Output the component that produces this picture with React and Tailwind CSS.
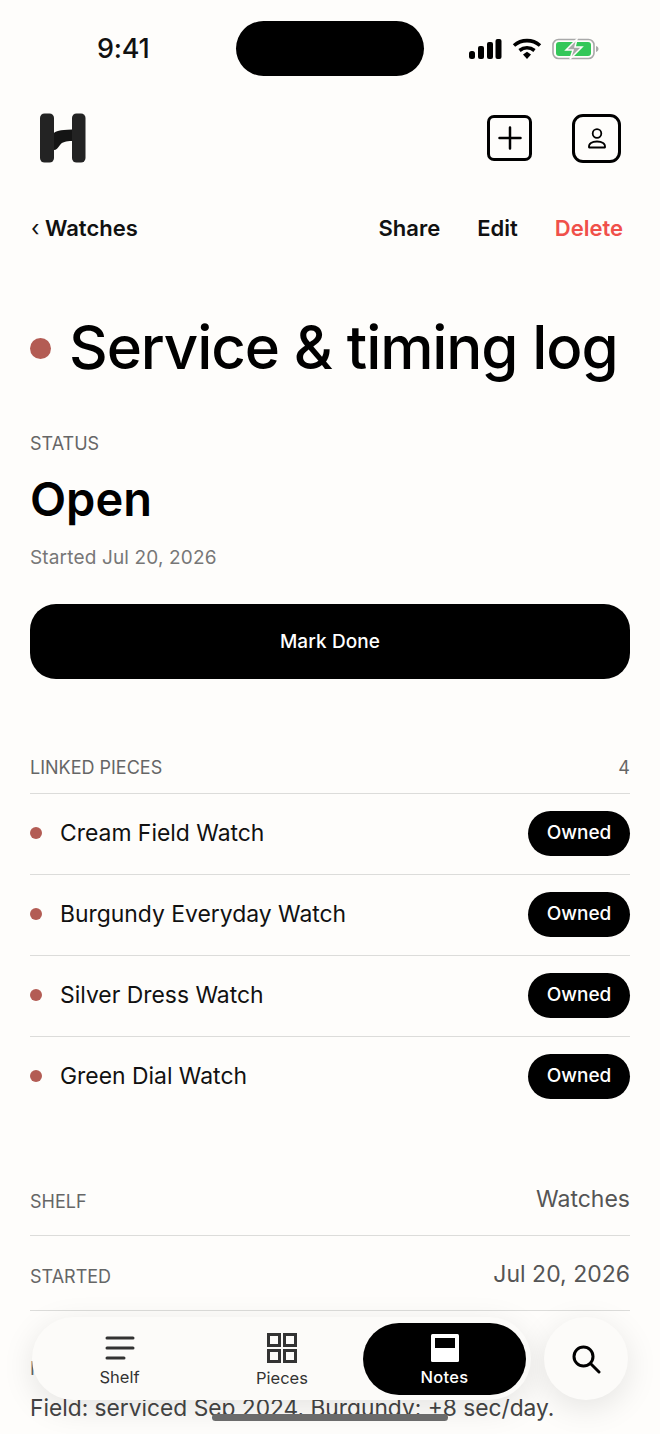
import React from "react";

const font = { fontFamily: "Inter, sans-serif" };

const pieces = ["Cream Field Watch", "Burgundy Everyday Watch", "Silver Dress Watch", "Green Dial Watch"];

function StatusBar() {
  return (
    <div className="h-[76px] flex items-start pl-[97px] pr-[61px] pt-[21px]">
      <div className="h-[55px] w-[54px] flex items-center pt-[2px] text-[27px] font-medium text-[#111] tracking-[-0.2px]">9:41</div>
      <div className="h-[55px] w-[188px] rounded-[28px] bg-black ml-[85px]"></div>
      <div className="flex items-center gap-[10px] h-[55px] ml-auto">
        <svg width="34" height="22" viewBox="0 0 34 22">
          <rect x="1" y="13" width="6" height="8" rx="2.500" fill="#000" />
          <rect x="10" y="8" width="6" height="13" rx="2" fill="#000" />
          <rect x="19" y="4" width="6" height="17" rx="2" fill="#000" />
          <rect x="27.500" y="1" width="6" height="20" rx="2" fill="#000" />
        </svg>
        <svg width="30" height="22" viewBox="0 0 30 22" fill="none">
          <path d="M2 7.500C9.500 1 20.500 1 28 7.500" stroke="#000" strokeWidth="3.600" />
          <path d="M7.500 12.500C12 9 18 9 22.500 12.500" stroke="#000" strokeWidth="3.600" />
          <path d="M11 16.500L15 13.800L19 16.500L15 21Z" fill="#000" />
        </svg>
        <svg width="47" height="22" viewBox="0 0 47 22" fill="none">
          <rect x="1" y="1.500" width="41" height="19" rx="5.500" stroke="#a9a9a9" strokeWidth="1.600" />
          <rect x="4" y="4" width="35" height="14" rx="3" fill="#34c759" />
          <path d="M44 8v6c1.500-.4 2.500-1.600 2.500-3s-1-2.600-2.500-3Z" fill="#a9a9a9" />
          <path d="M25 1L14 12h7l-3 9L30 9h-7l2-8Z" fill="#a9a9a9" stroke="#fefdfb" strokeWidth="1.500" />
        </svg>
      </div>
    </div>
  );
}

function Header() {
  return (
    <div className="h-[110px] flex items-center justify-between pl-[39px] pr-[39px] pt-[22px] pb-[8px]">
      <svg width="48" height="50" viewBox="0 0 48 50">
        <rect x="1" y="0.500" width="14" height="49" rx="4.500" fill="#232323" />
        <rect x="33" y="0.500" width="13.500" height="49" rx="4.500" fill="#232323" />
        <path d="M15 20C17 18 20 17 33 16.500V28C27 28 23 29 21 32C19 35 17 37 15 37Z" fill="#141414" />
      </svg>
      <div className="flex items-center gap-[40px]">
        <div className="w-[45px] h-[46px] rounded-[7px] border-[3px] border-black flex items-center justify-center">
          <svg width="24" height="24" viewBox="0 0 24 24" fill="none" stroke="#000" strokeWidth="2.500" strokeLinecap="round">
            <path d="M12 1.500v21M1.500 12h21" />
          </svg>
        </div>
        <div className="w-[49px] h-[49px] rounded-[11px] border-[3px] border-black flex items-center justify-center">
          <svg width="20" height="21" viewBox="0 0 20 21" fill="none" stroke="#000" strokeWidth="1.800">
            <circle cx="10" cy="5.500" r="4.300" />
            <path d="M2 19.500c-.5-4 3-6 8-6s8.500 2 8 6Z" strokeLinejoin="round" />
          </svg>
        </div>
      </div>
    </div>
  );
}

function NavRow() {
  return (
    <div className="flex items-center justify-between pl-[31px] pr-[37px] h-[28px] text-[22px] font-semibold mt-[28px]">
      <div className="text-[#111]"><span className="font-normal">‹</span> Watches</div>
      <div className="flex gap-[37px]">
        <span className="text-[#111]">Share</span>
        <span className="text-[#111]">Edit</span>
        <span className="text-[#f0504a]">Delete</span>
      </div>
    </div>
  );
}

function LinkedRow({ name }) {
  return (
    <div className="h-[81px] border-t border-[#dcdcda] flex items-center justify-between pb-[2px]">
      <div className="flex items-center gap-[18px]">
        <div className="w-[12px] h-[12px] rounded-full bg-[#b35c54]"></div>
        <div className="text-[22.900px] text-[#111]">{name}</div>
      </div>
      <div className="w-[102px] h-[45px] rounded-full bg-black text-white text-[19px] font-medium flex items-center justify-center">Owned</div>
    </div>
  );
}

function BottomNav() {
  return (
    <div className="absolute left-0 right-0 bottom-0 h-[144px]">
      <div className="absolute left-[32px] top-[27px] flex items-start gap-[13px]">
        <div className="w-[499px] h-[83px] rounded-[42px] bg-[#fcfbf9] shadow-[0_8px_32px_rgba(0,0,0,0.1)] flex items-center">
          <div className="w-[175px] flex flex-col items-center text-[#333] pt-[6px]">
            <svg width="30" height="24" viewBox="0 0 30 24" fill="none" stroke="#333" strokeWidth="3" strokeLinecap="round">
              <path d="M2 2h26M2 12h26M2 22h17" />
            </svg>
            <div className="text-[16.500px] leading-[22px] mt-[6px]">Shelf</div>
          </div>
          <div className="w-[150px] flex flex-col items-center text-[#333] pt-[4px]">
            <svg width="30" height="30" viewBox="0 0 30 30" fill="none" stroke="#333" strokeWidth="3">
              <rect x="1.500" y="1.500" width="11" height="11" />
              <rect x="17.500" y="1.500" width="11" height="11" />
              <rect x="1.500" y="17.500" width="11" height="11" />
              <rect x="17.500" y="17.500" width="11" height="11" />
            </svg>
            <div className="text-[16.500px] leading-[22px] mt-[4px]">Pieces</div>
          </div>
          <div className="w-[163px] h-[72px] ml-[6px] pt-[4px] rounded-[36px] bg-black flex flex-col items-center justify-center text-white">
            <svg width="28" height="28" viewBox="0 0 28 28">
              <rect x="0" y="0" width="28" height="28" rx="1.500" fill="#fff" />
              <rect x="4" y="4" width="20" height="10" fill="#000" />
            </svg>
            <div className="text-[16.500px] leading-[22px] mt-[4px] font-medium tracking-[0.3px]">Notes</div>
          </div>
        </div>
        <div className="w-[84px] h-[83px] rounded-full bg-[#fcfbf9] shadow-[0_8px_32px_rgba(0,0,0,0.1)] flex items-center justify-center">
          <svg width="30" height="30" viewBox="0 0 30 30" fill="none" stroke="#000" strokeWidth="3" strokeLinecap="round">
            <circle cx="12.500" cy="12.500" r="9.500" />
            <path d="M20 20l8 8" />
          </svg>
        </div>
      </div>
      <div className="absolute left-[212px] top-[124px] w-[236px] h-[7px] rounded-full bg-[#6b6b6b]"></div>
    </div>
  );
}

export default function App() {
  return (
    <div className="relative w-[660px] h-[1434px] overflow-hidden bg-[#fefdfb]" style={font}>
      <StatusBar />
      <Header />
      <NavRow />
      <div className="px-[30px]">
        <div className="flex items-center gap-[18px] mt-[60px] h-[90px]">
          <div className="w-[21px] h-[21px] rounded-full bg-[#b35c54] mt-[2px]"></div>
          <h1 className="text-[60px] font-medium text-black tracking-[-1.100px] whitespace-nowrap">Service & timing log</h1>
        </div>
        <div className="text-[18px] text-[#666] mt-[40px] leading-[24px]">STATUS</div>
        <div className="text-[47px] font-semibold text-black leading-[56px] mt-[15px]">Open</div>
        <div className="text-[19px] text-[#777] leading-[24px] mt-[19px] tracking-[0.15px]">Started Jul 20, 2026</div>
        <div className="h-[75px] rounded-[26px] bg-black text-white text-[19px] font-medium tracking-[0.1px] flex items-center justify-center mt-[34px] pt-[2px]">Mark Done</div>

        <div className="flex items-center justify-between mt-[76px] h-[24px] text-[18px] text-[#666] mb-[14px]">
          <span>LINKED PIECES</span>
          <span>4</span>
        </div>
        {pieces.map((p) => (
          <LinkedRow key={p} name={p} />
        ))}

        <div className="flex items-center justify-between h-[75px] mt-[44px] pt-[2px] border-b border-[#dcdcda]">
          <span className="text-[18px] text-[#666] mt-[4px]">SHELF</span>
          <span className="text-[23px] text-[#555]">Watches</span>
        </div>
        <div className="flex items-center justify-between h-[75px] pt-[2px] border-b border-[#dcdcda]">
          <span className="text-[18px] text-[#666] mt-[4px]">STARTED</span>
          <span className="text-[23px] text-[#555]">Jul 20, 2026</span>
        </div>
        <div className="text-[18px] text-[#666] mt-[44px] h-[24px]">NOTES</div>
        <div className="text-[22.750px] text-[#444] mt-[12px] whitespace-nowrap">Field: serviced Sep 2024. Burgundy: +8 sec/day.</div>
      </div>
      <BottomNav />
    </div>
  );
}
